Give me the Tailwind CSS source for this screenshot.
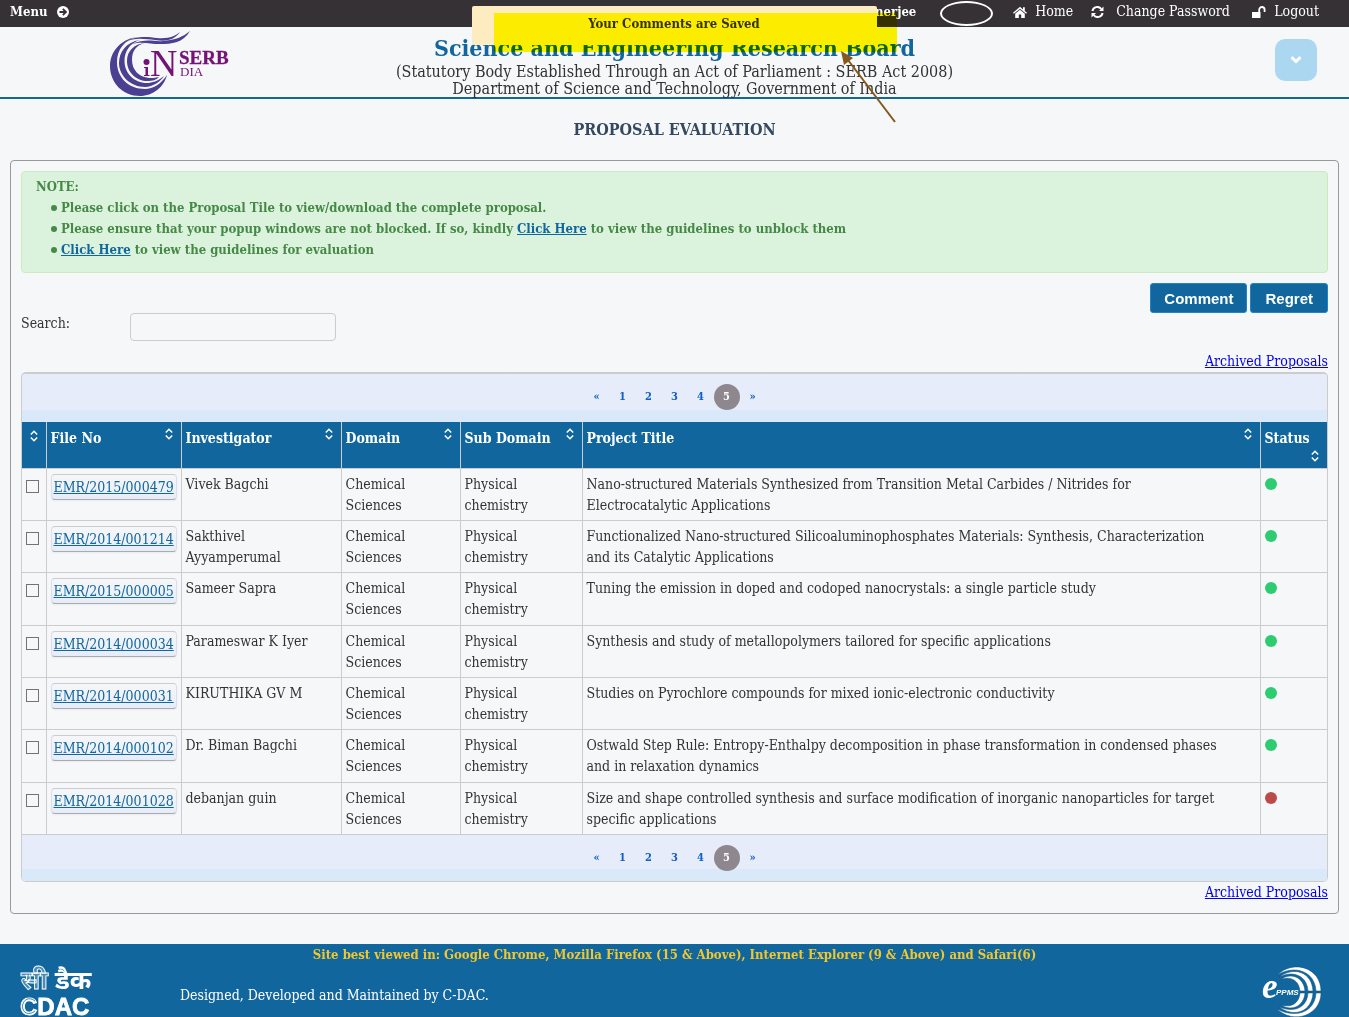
<!DOCTYPE html>
<html lang="en">
<head>
    <meta charset="UTF-8">
    <meta name="viewport" content="width=device-width, initial-scale=1.0">
    <title>Proposal Evaluation</title>
    <script src="https://cdn.jsdelivr.net/npm/@tailwindcss/browser@4"></script>
</head>
<body class="bg-[#f6f7f9] text-[#333] text-sm leading-[21px] font-['Roboto_Slab','DejaVu_Serif_Condensed','DejaVu_Serif',serif] relative h-screen overflow-hidden">
    <!-- Top bar -->
    <nav class="bg-[#353135] text-white h-[27px] flex items-start justify-between px-2.5 pt-px">
        <button type="button" class="flex items-center gap-2.5 text-[13px] font-bold">
            Menu
            <svg class="size-3" viewBox="0 0 12 12" fill="none"><circle cx="6" cy="6" r="6" fill="#fff"/><path d="M2.5 6h6M5.8 2.8L9 6L5.8 9.2" stroke="#353135" stroke-width="1.8"/></svg>
        </button>
        <div class="flex items-center pr-5">
            <span class="text-[13px] font-bold mr-[97px]">Banerjee</span>
            <a href="#" class="flex items-center gap-2 mr-[18px]">
                <svg class="w-[14px] h-3" viewBox="0 0 14 12" fill="#fff"><path d="M7 .8L0 6.8L.9 7.8L7 2.7L13.1 7.8L14 6.8L11.8 4.9V1.2H10V3.4zM7 3.7L2.2 7.7V12H5.8V8.6H8.2V12H11.8V7.7z"/></svg>
                Home
            </a>
            <a href="#" class="flex items-center gap-3 mr-[18px]">
                <svg class="w-[13px] h-3" viewBox="0 0 13 12" fill="none"><path d="M1.4 5A5 5 0 0 1 10.3 3M11.6 7A5 5 0 0 1 2.7 9" stroke="#fff" stroke-width="2"/><path d="M12.5.5V5H8zM.5 11.5V7H5z" fill="#fff"/></svg>
                <span class="min-w-[118px]">Change Password</span>
            </a>
            <a href="#" class="flex items-center gap-2">
                <svg class="w-[14px] h-3" viewBox="0 0 14 12"><path d="M0 6H8.5V12H0z" fill="#fff"/><path d="M7.2 6V3.7a2.7 2.7 0 0 1 5.4 0V6" fill="none" stroke="#fff" stroke-width="1.8"/></svg>
                Logout
            </a>
        </div>
    </nav>

    <!-- Header -->
    <header class="h-[72px] border-b-2 border-[#11669d] relative text-center">
        <svg class="absolute left-[110px] top-1 w-[120px] h-[66px]" viewBox="0 0 120 66" role="img" aria-label="SERB INDIA">
            <g fill="#4b3f92">
                <path d="M27 6C8 9 0 23 0 35C0 52 13 65 30 65C43 65 54 56 57 44C51 53 43 58 35 58C19 58 7 47 7 31C7 19 14 9 27 6z"/>
                <path d="M30 9C16 11 9 21 9 32C9 45 21 56 35 56C43 56 51 50 54 45C48 50 42 52 37 52C24 52 14.500 42 14.500 30C14.500 20 20 12 30 9z"/>
                <path d="M35 12C24 13 17 20 17 30C17 42 27 50 37 50C43 50 46 49 49 46C45 47 42 47 39 47C29 46 22 39 22 29C22 20 26 14 35 12z"/>
                <path d="M15 11C27 4 38 6 47 7C59 8 65 5 70 1C64 9 56 11 45 9C35 8 25 6 15 11z"/>
                <path d="M22 13C36 7 44 11 53 10C65 9 73 6 80 0C73 12 62 13 50 13C40 13 32 10 22 13z"/>
            </g>
            <g fill="#741276" font-family="Liberation Serif, serif">
                <circle cx="36.500" cy="31" r="3"/>
                <path d="M34 36H38V44H39.500V45H34V44H35.500V37H34z"/>
                <text x="40" y="45" font-size="38">N</text>
                <text x="69" y="33" font-size="19" font-weight="bold" stroke="#741276" stroke-width=".3">SERB</text>
                <text x="70" y="45" font-size="13">DIA</text>
            </g>
        </svg>
        <h1 class="text-[23px] leading-[26px] font-bold text-[#11669d] pt-2">Science and Engineering Research Board</h1>
        <p class="text-base leading-[17px] pt-0.5">(Statutory Body Established Through an Act of Parliament : SERB Act 2008)</p>
        <p class="text-base leading-[17px]">Department of Science and Technology, Government of India</p>
        <button type="button" aria-label="Expand" class="absolute right-8 top-3 size-[42px] rounded-[10px] bg-[#abd7f1] flex items-center justify-center">
            <svg class="w-3 h-2" viewBox="0 0 12 8" fill="none"><path d="M1.500 1.200L6 5.500L10.500 1.200" stroke="#fff" stroke-width="3"/></svg>
        </button>
    </header>

    <h2 class="text-center text-base leading-[20px] font-bold text-[#34495e] pt-[21px] pb-5">PROPOSAL EVALUATION</h2>

    <main class="mx-2.5 border border-[#999] rounded p-2.5">
        <section class="bg-[#dbf2dc] border border-[#cdeabf] rounded-sm text-[#468847] text-[13px] font-bold px-[14px] pt-1 pb-3">
            <p>NOTE:</p>
            <ul class="pl-[15px] *:flex *:items-center *:before:mr-1 *:before:size-1.5 *:before:rounded-full *:before:bg-[#468847]">
                <li><p>Please click on the Proposal Tile to view/download the complete proposal.</p></li>
                <li><p>Please ensure that your popup windows are not blocked. If so, kindly <a href="#" class="text-[#11669d] underline">Click Here</a> to view the guidelines to unblock them</p></li>
                <li><p><a href="#" class="text-[#11669d] underline">Click Here</a> to view the guidelines for evaluation</p></li>
            </ul>
        </section>

        <div class="flex justify-end gap-[3px] mt-2.5 font-['Liberation_Sans',sans-serif] font-bold text-[15px] text-white">
            <button type="button" class="h-[30px] px-[13px] bg-[#11669d] border border-[#2184c9] rounded-[3px]">Comment</button>
            <button type="button" class="h-[30px] px-[14px] bg-[#11669d] border border-[#2184c9] rounded-[3px]">Regret</button>
        </div>
        <div class="flex">
            <label for="search" class="w-[109px]">Search:</label>
            <input id="search" type="text" class="w-[206px] h-7 border border-[#ccc] rounded px-2">
        </div>
        <div class="text-right mt-2.5"><a href="#" class="text-[#00e] underline">Archived Proposals</a></div>

        <div class="border border-t-2 border-[#ccc] rounded-[5px] overflow-hidden">
            <div data-pager class="h-12 pt-2.5 flex justify-center text-[11px] font-bold text-[#0f5fc4] bg-linear-to-b from-[#e6ecf9] from-75% to-[#d9e9f9] to-75%"></div>
            <table class="w-full h-[413px] table-fixed border-collapse">
                <thead>
                    <tr id="head" class="bg-[#11669d] text-white text-sm text-left align-top h-[46px]"></tr>
                </thead>
                <tbody id="proposals"></tbody>
            </table>
            <div data-pager class="h-[46px] pt-2.5 flex justify-center text-[11px] font-bold text-[#0f5fc4] bg-linear-to-b from-[#e6ecf9] from-75% to-[#d9e9f9] to-75%"></div>
        </div>
        <div class="text-right"><a href="#" class="text-[#00e] underline">Archived Proposals</a></div>
    </main>

    <!-- Footer -->
    <footer class="mt-[30px] h-[90px] bg-[#11669d] text-white relative">
        <p class="text-center text-[13px] font-bold text-[#f2c72e]">Site best viewed in: Google Chrome, Mozilla Firefox (15 &amp; Above), Internet Explorer (9 &amp; Above) and Safari(6)</p>
        <div class="flex justify-between pl-5 pr-[25px]">
            <div class="w-[72px] font-bold" role="img" aria-label="CDAC">
                <svg class="block w-[72px] h-[52px] overflow-visible" viewBox="0 0 72 52" fill="#fff">
                    <g font-size="26" font-family="Noto Sans Devanagari, Lohit Devanagari, FreeSans, sans-serif">
                        <text x="1" y="24" fill="#4b8bb5" stroke="#fff" stroke-width=".9">सी</text>
                        <text x="35" y="24">डैक</text>
                    </g>
                    <text x="0" y="50" font-size="24" stroke="#fff" stroke-width=".8" font-family="Liberation Sans, sans-serif">CDAC</text>
                    <path d="M15 36C9 31 2.500 35 2.500 41.500S9 51 15 46" fill="none" stroke="#11669d" stroke-width=".8"/>
                </svg>
            </div>
            <p class="grow pl-[88px] pt-5">Designed, Developed and Maintained by C-DAC.</p>
            <svg class="w-[62px] h-[54px]" viewBox="0 0 62 54" role="img" aria-label="ePPMS">
                <g fill="#fff" stroke="#0b4a76" stroke-width=".5">
                    <path d="M15 10C32-6 59 3 59 26H54C53 7 34-1 15 10z"/>
                    <path d="M15 44C32 60 59 50 59 28H54C53 47 34 54 15 44z"/>
                    <path d="M17 12C32 1 50 7 51 26H46C45 11 32 5 17 12z"/>
                    <path d="M17 42C32 53 50 47 51 28H46C45 43 32 48 17 42z"/>
                    <path d="M19 14C30 7 42 13 43 26H38C37 16 30 11 19 14z"/>
                    <path d="M19 40C30 47 42 41 43 28H38C37 38 30 43 19 40z"/>
                </g>
                <text x="0" y="33" font-size="35" font-style="italic" font-weight="bold" font-family="Liberation Serif, serif" fill="#fff">e</text>
                <text x="14" y="30" font-size="8" font-style="italic" font-weight="bold" font-family="Liberation Sans, sans-serif" fill="#fff">PPMS</text>
            </svg>
        </div>
    </footer>

    <!-- Saved message with its annotation marks -->
    <div class="absolute left-[940px] top-px w-[53px] h-[25px] border-2 border-white rounded-[50%]"></div>
    <div role="status" class="absolute left-1/2 -ml-[203px] top-1.5 w-[405px] h-[39px] pt-[7px] rounded-xs bg-[#fdecc0] text-center text-[13px] font-bold">Your Comments are Saved</div>
    <div class="absolute left-1/2 -ml-[181px] top-[13px] w-[403px] h-[39px] bg-[#fcf000] mix-blend-darken"></div>
    <svg class="absolute left-1/2 ml-[165px] top-[50px] w-[57px] h-[74px]" viewBox="0 0 57 74"><path d="M8 10L55 72" stroke="#85581b" stroke-width="2"/><path d="M1 1L13 8L4 15z" fill="#85581b"/></svg>

    <script>
        const columns = [
            ['', 'w-6'],
            ['File No', 'w-[135px]'],
            ['Investigator', 'w-[160px]'],
            ['Domain', 'w-[119px]'],
            ['Sub Domain', 'w-[122px]'],
            ['Project Title', ''],
            ['Status', 'w-[67px]']
        ];
        const proposals = [
            ['EMR/2015/000479', 'Vivek Bagchi', 'Nano-structured Materials Synthesized from Transition Metal Carbides / Nitrides for<br>Electrocatalytic Applications', 'bg-[#2ecc71]'],
            ['EMR/2014/001214', 'Sakthivel Ayyamperumal', 'Functionalized Nano-structured Silicoaluminophosphates Materials: Synthesis, Characterization<br>and its Catalytic Applications', 'bg-[#2ecc71]'],
            ['EMR/2015/000005', 'Sameer Sapra', 'Tuning the emission in doped and codoped nanocrystals: a single particle study', 'bg-[#2ecc71]'],
            ['EMR/2014/000034', 'Parameswar K Iyer', 'Synthesis and study of metallopolymers tailored for specific applications', 'bg-[#2ecc71]'],
            ['EMR/2014/000031', 'KIRUTHIKA GV M', 'Studies on Pyrochlore compounds for mixed ionic-electronic conductivity', 'bg-[#2ecc71]'],
            ['EMR/2014/000102', 'Dr. Biman Bagchi', 'Ostwald Step Rule: Entropy-Enthalpy decomposition in phase transformation in condensed phases<br>and in relaxation dynamics', 'bg-[#2ecc71]'],
            ['EMR/2014/001028', 'debanjan guin', 'Size and shape controlled synthesis and surface modification of inorganic nanoparticles for target<br>specific applications', 'bg-[#bd4a4a]']
        ];

        const arrows = '<path d="M.8 4.5L4 1.3L7.2 4.5M.8 7.5L4 10.7L7.2 7.5"/></svg>';
        const sortIcon = '<svg class="float-right mt-1.5 mr-1 w-2 h-3" viewBox="0 0 8 12" fill="none" stroke="#fff" stroke-width="1.5">' + arrows;
        const sortIconBelow = '<svg class="block ml-auto mr-1 mt-0.5 w-2 h-3" viewBox="0 0 8 12" fill="none" stroke="#fff" stroke-width="1.5">' + arrows;

        document.getElementById('head').innerHTML = columns.map(([name, width]) => `
            <th class="${width} border-r border-[#ccc] last:border-r-0 px-1 first:pt-0.5">
                ${name === 'Status' ? '' : sortIcon}<span class="inline-block pt-1.5">${name}</span>${name === 'Status' ? sortIconBelow : ''}
            </th>`).join('');

        document.getElementById('proposals').innerHTML = proposals.map(([file, person, title, status]) => `
            <tr class="border-y border-[#ccc] align-top h-[52px] *:border-r *:border-[#ccc] *:px-1 *:pt-[5px] *:pb-1">
                <td><input type="checkbox" aria-label="${file}" class="appearance-none block mt-1.5 size-[13px] border border-[#7a706c]"></td>
                <td><a href="#" class="inline-block px-0.5 rounded border border-t-[#ccc] border-x-[#dde] border-b-[#aaa] shadow-xs bg-linear-to-b from-[#f6f7f9] to-[#e6ecf9] text-[#11669d] underline leading-6">${file}</a></td>
                <td>${person}</td>
                <td>Chemical Sciences</td>
                <td>Physical chemistry</td>
                <td>${title}</td>
                <td class="last:border-r-0"><span class="block mt-1 size-3 rounded-full ${status}"></span></td>
            </tr>`).join('');

        document.querySelectorAll('[data-pager]').forEach(pager => {
            pager.innerHTML = ['«', '1', '2', '3', '4', '5', '»'].map(p => p === '5'
                ? '<a href="#" class="size-[26px] leading-[26px] rounded-full bg-[#8e878e] text-white text-center">5</a>'
                : `<a href="#" class="w-[26px] leading-[26px] text-center">${p}</a>`).join('');
        });
    </script>
</body>
</html>
